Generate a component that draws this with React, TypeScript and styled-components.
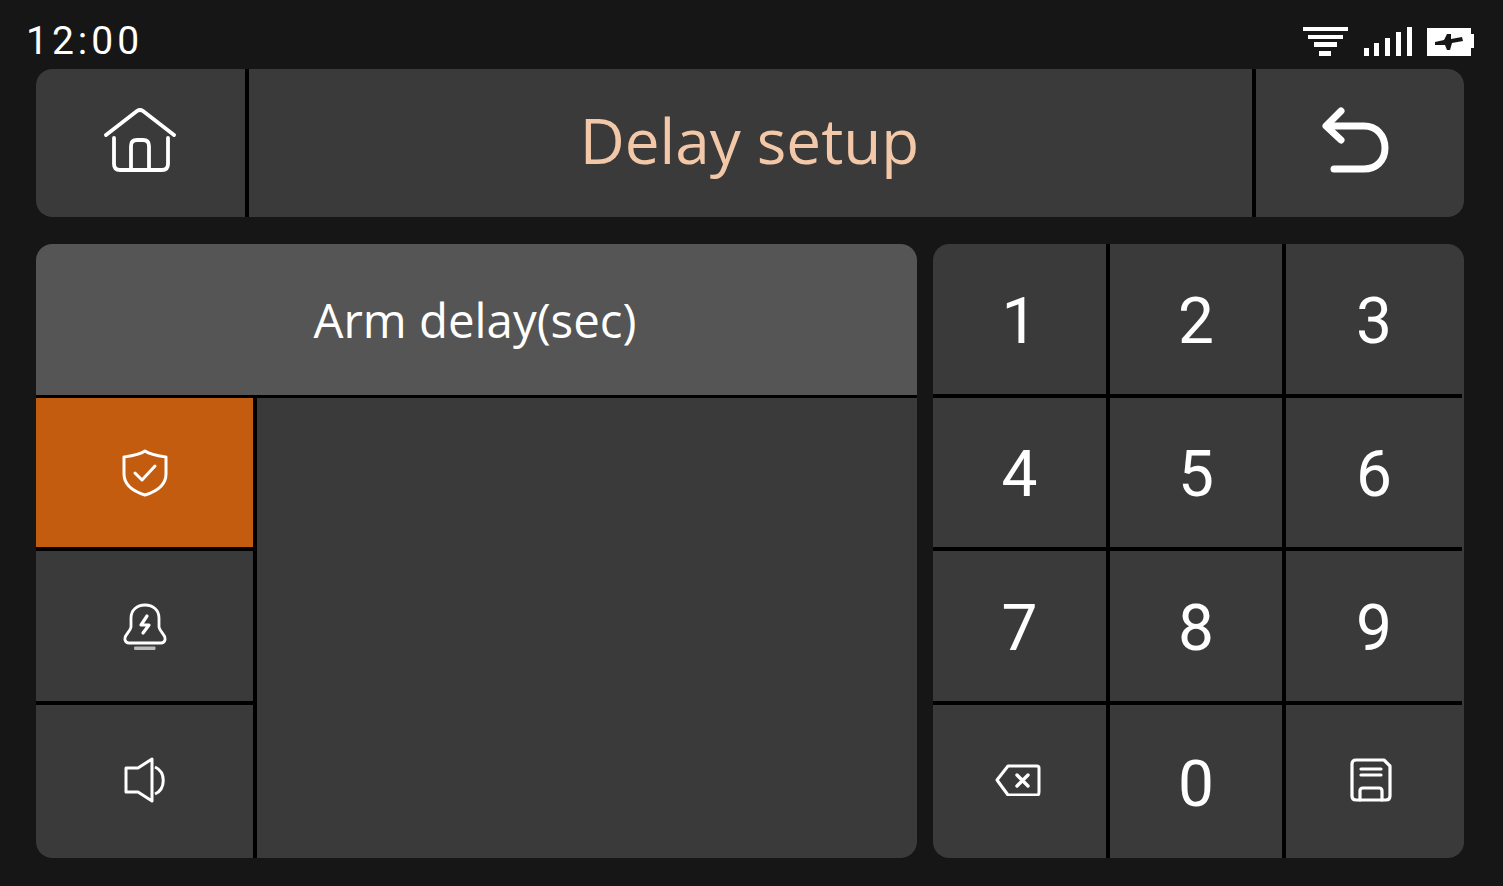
import styled, { createGlobalStyle } from "styled-components";

const GlobalStyle = createGlobalStyle`
  html, body {
    margin: 0;
    padding: 0;
    background: #161616;
  }
`;

const Screen = styled.div`
  width: 1503px;
  height: 886px;
  box-sizing: border-box;
  overflow: hidden;
  background: #161616;
  font-family: "Open Sans", "Noto Sans", sans-serif;
  color: #fff;
`;

const StatusBar = styled.div`
  height: 69px;
  box-sizing: border-box;
  padding: 14px 28px 0 26px;
  display: flex;
  align-items: center;
  justify-content: space-between;
`;

const Clock = styled.div`
  font-family: "Roboto", "Liberation Sans", sans-serif;
  font-size: 39px;
  line-height: 1;
  letter-spacing: 4px;
  white-space: nowrap;
`;

const StatusIcons = styled.div`
  display: flex;
  align-items: center;
  gap: 15px;
`;

const Content = styled.div`
  padding: 0 39px 0 36px;
`;

const Header = styled.div`
  height: 148px;
  display: grid;
  grid-template-columns: 209px 1fr 208px;
  gap: 4px;
  background: #000;
  border-radius: 16px;
  overflow: hidden;
  margin-bottom: 27px;
`;

const HeaderCell = styled.div`
  background: #3a3a3a;
  display: flex;
  align-items: center;
  justify-content: center;
`;

const Title = styled.div`
  font-size: 62px;
  line-height: 1;
  color: #f3c8a8;
  margin-bottom: 6px;
  margin-right: 2px;
`;

const Main = styled.div`
  display: flex;
  gap: 16px;
  height: 614px;
`;

const LeftPanel = styled.div`
  width: 881px;
  display: flex;
  flex-direction: column;
  border-radius: 16px;
  overflow: hidden;
  background: #000;
`;

const Banner = styled.div`
  height: 151px;
  flex: none;
  background: #555555;
  display: flex;
  align-items: center;
  justify-content: center;
  font-size: 47.4px;
  margin-bottom: 3px;
  padding-right: 3px;
`;

const Body = styled.div`
  flex: 1;
  display: flex;
  gap: 4px;
`;

const Tabs = styled.div`
  width: 217px;
  display: grid;
  grid-template-rows: 149px 150px 154px;
  gap: 4px 0;
`;

const Tab = styled.div<{ $active?: boolean }>`
  background: ${(p) => (p.$active ? "#c45c10" : "#3a3a3a")};
  display: flex;
  align-items: center;
  justify-content: center;
`;

const Blank = styled.div`
  flex: 1;
  background: #3a3a3a;
`;

const KeypadPanel = styled.div`
  width: 531px;
  box-sizing: border-box;
  padding-right: 2px;
  background: #3a3a3a;
  border-radius: 16px;
  overflow: hidden;
`;

const Keypad = styled.div`
  height: 100%;
  background: #000;
  display: grid;
  grid-template-columns: 173px 172px 176px;
  grid-template-rows: 150px 149px 150px 154px;
  gap: 4px;
`;

const Key = styled.div`
  background: #3a3a3a;
  display: flex;
  align-items: center;
  justify-content: center;
  font-family: "Roboto", "Liberation Sans", sans-serif;
  font-size: 64px;
  line-height: 1;
`;

const KeyDigit = styled.span`
  margin-top: 5px;
`;

const HomeSvg = styled.svg`
  margin: 0 2px 6px 0;
`;

const BackSvg = styled.svg`
  margin: 0 8px 6px 0;
`;

const BellSvg = styled.svg`
  margin-top: 2px;
`;

const SpeakerSvg = styled.svg`
  margin-bottom: 4px;
`;

const BackspaceSvg = styled.svg`
  margin: 0 4px 4px 0;
`;

const SaveSvg = styled.svg`
  margin: 0 6px 4px 0;
`;

const WifiIcon = () => (
  <svg width="46" height="30" viewBox="0 0 46 30">
    <rect x="0" y="0" width="45" height="4" fill="#fff" />
    <rect x="5" y="8" width="35" height="4" fill="#fff" />
    <rect x="11" y="15" width="23" height="5" fill="#fff" />
    <rect x="16" y="24" width="12" height="5" fill="#fff" />
  </svg>
);

const SignalIcon = () => (
  <svg width="48" height="30" viewBox="0 0 48 30" fill="#fff">
    <rect x="0" y="21" width="5" height="8" />
    <rect x="10" y="16" width="5" height="13" />
    <rect x="21" y="11" width="5" height="18" />
    <rect x="32" y="5" width="5" height="24" />
    <rect x="43" y="0" width="5" height="29" />
  </svg>
);

const BatteryIcon = () => (
  <svg width="48" height="30" viewBox="0 0 48 30">
    <rect x="0" y="1" width="44" height="28" fill="#fff" />
    <rect x="44" y="7" width="3" height="14" fill="#fff" />
    <path d="M8 15 L17 13 L20 7 L24 7 L24 12 L35 10 L36 14 L25 16 L23 23 L20 23 L18 18 L8 18 Z" fill="#161616" />
  </svg>
);

const HomeIcon = () => (
  <HomeSvg width="72" height="64" viewBox="0 0 72 64" fill="none" stroke="#fff" strokeWidth="3.8" strokeLinecap="round" strokeLinejoin="round">
    <path d="M2 27 L33 3 Q36 1 39 3 L70 27" />
    <path d="M10 30 V56 Q10 62 16 62 H58 Q64 62 64 56 V30" />
    <path d="M27 61 V38 Q27 32 33 32 H39 Q45 32 45 38 V61" />
  </HomeSvg>
);

const BackIcon = () => (
  <BackSvg width="68" height="66" viewBox="0 0 68 66" fill="none" stroke="#fff" strokeWidth="7" strokeLinecap="round" strokeLinejoin="round">
    <path d="M19 4 L4 19 L19 33" />
    <path d="M5 19 H42 C54 19 63 28 63 41 C63 54 54 62 42 62 H12" />
  </BackSvg>
);

const ShieldIcon = () => (
  <svg width="46" height="48" viewBox="0 0 46 48" fill="none" stroke="#fff" strokeWidth="3" strokeLinecap="round" strokeLinejoin="round">
    <path d="M23 2 C29 6 37 7 44 8 V25 C44 35 36 42 23 46 C10 42 2 35 2 25 V8 C9 7 17 6 23 2 Z" />
    <path d="M13 24 L20 31 L33 17" />
  </svg>
);

const BellIcon = () => (
  <BellSvg width="44" height="48" viewBox="0 0 44 48" fill="none" stroke="#fff" strokeWidth="2.8" strokeLinecap="round" strokeLinejoin="round">
    <path d="M8 24 V15 C8 7 14 2 22 2 C30 2 36 7 36 15 V24 C37 30 43 31 42 37 Q41 40 38 40 H6 Q3 40 2 37 C1 31 7 30 8 24 Z" />
    <path d="M24 13 L18 22 H26 L20 30" strokeWidth="3.2" />
    <rect x="12" y="44" width="20" height="2.5" fill="#bbb" stroke="#bbb" strokeWidth="1" />
  </BellSvg>
);

const SpeakerIcon = () => (
  <SpeakerSvg width="42" height="46" viewBox="0 0 42 46" fill="none" stroke="#fff" strokeWidth="3" strokeLinejoin="round">
    <path d="M2 11 H14 L28 2 V44 L14 35 H2 Z" />
    <path d="M31 10 C42 15 42 32 31 37" />
  </SpeakerSvg>
);

const BackspaceIcon = () => (
  <BackspaceSvg width="46" height="32" viewBox="0 0 46 32" fill="none" stroke="#fff" strokeWidth="3" strokeLinecap="round" strokeLinejoin="round">
    <path d="M13 2 H42 Q44 2 44 4 V28 Q44 31 42 31 H13 L2 16 Z" />
    <path d="M22 11 L33 22 M33 11 L22 22" strokeWidth="3.4" />
  </BackspaceSvg>
);

const SaveIcon = () => (
  <SaveSvg width="42" height="44" viewBox="0 0 42 44" fill="none" stroke="#fff" strokeWidth="3.2" strokeLinecap="round" strokeLinejoin="round">
    <path d="M6 2 H34 L40 8 V38 Q40 42 36 42 H6 Q2 42 2 38 V6 Q2 2 6 2 Z" />
    <path d="M11 11 H31 M11 17 H31" />
    <path d="M10 42 V33 Q10 30 13 30 H29 Q32 30 32 33 V42" />
  </SaveSvg>
);

export default function App() {
  return (
    <Screen>
      <GlobalStyle />
      <StatusBar>
        <Clock>12:00</Clock>
        <StatusIcons>
          <WifiIcon />
          <SignalIcon />
          <BatteryIcon />
        </StatusIcons>
      </StatusBar>
      <Content>
        <Header>
          <HeaderCell>
            <HomeIcon />
          </HeaderCell>
          <HeaderCell>
            <Title>Delay setup</Title>
          </HeaderCell>
          <HeaderCell>
            <BackIcon />
          </HeaderCell>
        </Header>
        <Main>
          <LeftPanel>
            <Banner>Arm delay(sec)</Banner>
            <Body>
              <Tabs>
                <Tab $active>
                  <ShieldIcon />
                </Tab>
                <Tab>
                  <BellIcon />
                </Tab>
                <Tab>
                  <SpeakerIcon />
                </Tab>
              </Tabs>
              <Blank />
            </Body>
          </LeftPanel>
          <KeypadPanel>
            <Keypad>
              {["1", "2", "3", "4", "5", "6", "7", "8", "9"].map((n) => (
                <Key key={n}>
                  <KeyDigit>{n}</KeyDigit>
                </Key>
              ))}
              <Key>
                <BackspaceIcon />
              </Key>
              <Key>
                <KeyDigit>0</KeyDigit>
              </Key>
              <Key>
                <SaveIcon />
              </Key>
            </Keypad>
          </KeypadPanel>
        </Main>
      </Content>
    </Screen>
  );
}
